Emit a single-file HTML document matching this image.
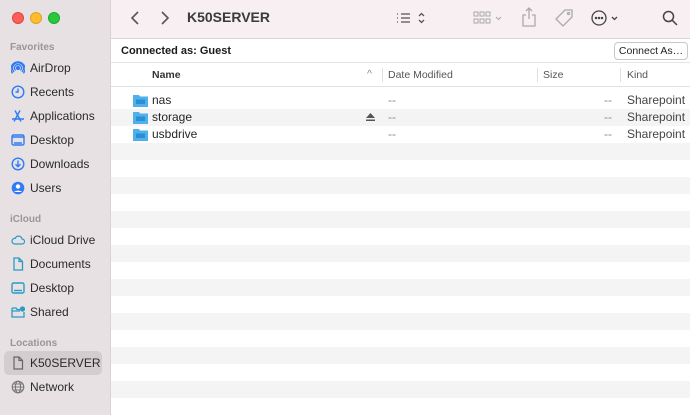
<!DOCTYPE html>
<html><head><meta charset="utf-8"><style>
*{margin:0;padding:0;box-sizing:border-box}
body{width:690px;height:415px;overflow:hidden;font-family:"Liberation Sans",sans-serif;background:#fff;position:relative;color:#262626}
.sb{position:absolute;left:0;top:0;width:111px;height:415px;background:#e7e1e4;border-right:1px solid #d8d2d5}
.dot{position:absolute;top:12px;width:12px;height:12px;border-radius:50%}
.sec{position:absolute;left:10px;font-size:10px;color:#9a9598;font-weight:bold}
.it{position:absolute;left:30px;font-size:12px;color:#2a2a2a}
.ic{position:absolute;left:11px;width:14px;height:14px}
.tb{position:absolute;left:111px;top:0;width:579px;height:39px;background:#f7eff2;border-bottom:1px solid #dcd6d8}
.cb{position:absolute;left:111px;top:39px;width:579px;height:24px;border-bottom:1px solid #e4e4e4}
.hd{position:absolute;left:111px;top:63px;width:579px;height:24px;border-bottom:1px solid #e2e2e2;font-size:10.5px;color:#555}
.row{position:absolute;left:111px;width:579px;height:17px;font-size:12px}
.g{background:#f4f4f4}
.t{position:absolute;top:1px}
</style></head><body>
<div class="sb">
<div class="dot" style="left:12px;background:#fe5f57;border:0.5px solid #e0443e"></div>
<div class="dot" style="left:30px;background:#febc2e;border:0.5px solid #dea123"></div>
<div class="dot" style="left:48px;background:#28c840;border:0.5px solid #1aab29"></div>
<div class="sec" style="top:42px">Favorites</div>
<svg class="ic" style="top:61px" viewBox="0 0 14 14" fill="none" stroke="#2f7bf5" stroke-width="1.3"><circle cx="7" cy="7" r="1.5" fill="#2f7bf5"/><path d="M4.5 9.5a3.5 3.5 0 1 1 5 0M3 11a5.5 5.5 0 1 1 8 0M1.6 12.3a7 7 0 1 1 10.8 0"/></svg>
<div class="it" style="top:61px">AirDrop</div>
<svg class="ic" style="top:85px" viewBox="0 0 14 14" fill="none" stroke="#2f7bf5" stroke-width="1.4"><circle cx="7" cy="7" r="5.8"/><path d="M7 3.5V7H4.5"/></svg>
<div class="it" style="top:85px">Recents</div>
<svg class="ic" style="top:109px" viewBox="0 0 14 14" fill="none" stroke="#2f7bf5" stroke-width="1.4"><path d="M4 1.5l6 11M9 1.5l-6 11M1 10h12"/></svg>
<div class="it" style="top:109px">Applications</div>
<svg class="ic" style="top:133px" viewBox="0 0 14 14" fill="none" stroke="#2f7bf5" stroke-width="1.4"><rect x="1" y="2" width="12" height="10" rx="1.5"/><path d="M1 4h12M3 10h8"/></svg>
<div class="it" style="top:133px">Desktop</div>
<svg class="ic" style="top:157px" viewBox="0 0 14 14" fill="none" stroke="#2f7bf5" stroke-width="1.4"><circle cx="7" cy="7" r="5.8"/><path d="M7 3.5v6M4.5 7.3L7 9.7l2.5-2.4"/></svg>
<div class="it" style="top:157px">Downloads</div>
<svg class="ic" style="top:181px" viewBox="0 0 14 14"><circle cx="7" cy="7" r="6.3" fill="#2f7bf5"/><circle cx="7" cy="5.5" r="2.2" fill="#fff"/><path d="M3 11a5 3.5 0 0 1 8 0" fill="#fff"/></svg>
<div class="it" style="top:181px">Users</div>
<div class="sec" style="top:214px">iCloud</div>
<svg class="ic" style="top:233px" viewBox="0 0 14 14" fill="none" stroke="#2a9cc4" stroke-width="1.2"><path d="M3.5 11h7.5a2.5 2.5 0 0 0 0-5 3.5 3.5 0 0 0-6.7-.7A2.8 2.8 0 0 0 3.5 11z"/></svg>
<div class="it" style="top:233px">iCloud Drive</div>
<svg class="ic" style="top:257px" viewBox="0 0 14 14" fill="none" stroke="#2a9cc4" stroke-width="1.3"><path d="M3 1h5l3.5 3.5V13H3zM8 1v3.5h3.5"/></svg>
<div class="it" style="top:257px">Documents</div>
<svg class="ic" style="top:281px" viewBox="0 0 14 14" fill="none" stroke="#2a9cc4" stroke-width="1.4"><rect x="1" y="2" width="12" height="10" rx="1.5"/><path d="M3 9.5h8"/></svg>
<div class="it" style="top:281px">Desktop</div>
<svg class="ic" style="top:305px" viewBox="0 0 14 14" fill="none" stroke="#2a9cc4" stroke-width="1.3"><path d="M1 3h4l1 1.5h3M1 3v9h12V7M1 6h8"/><circle cx="11.5" cy="4" r="2" fill="#2a9cc4"/></svg>
<div class="it" style="top:305px">Shared</div>
<div class="sec" style="top:338px">Locations</div>
<div style="position:absolute;left:4px;top:351px;width:98px;height:24px;background:#d3cdd0;border-radius:5px"></div>
<svg class="ic" style="top:356px" viewBox="0 0 14 14" fill="none" stroke="#666" stroke-width="1.2"><path d="M3 1h5l3.5 3.5V13H3zM8 1v3.5h3.5"/></svg>
<div class="it" style="top:356px">K50SERVER</div>
<svg class="ic" style="top:380px" viewBox="0 0 14 14" fill="none" stroke="#777" stroke-width="1.1"><circle cx="7" cy="7" r="5.8"/><ellipse cx="7" cy="7" rx="2.6" ry="5.8"/><path d="M1.2 7h11.6M2 4h10M2 10h10"/></svg>
<div class="it" style="top:380px">Network</div>
</div>
<div class="tb">
<svg style="position:absolute;left:19px;top:10px" width="10" height="16" viewBox="0 0 10 16" fill="none" stroke="#555" stroke-width="1.6"><path d="M8 2L2 8l6 6"/></svg>
<svg style="position:absolute;left:49px;top:10px" width="10" height="16" viewBox="0 0 10 16" fill="none" stroke="#555" stroke-width="1.6"><path d="M2 2l6 6-6 6"/></svg>
<div style="position:absolute;left:76px;top:9px;font-size:14px;font-weight:bold;color:#3a3a3a">K50SERVER</div>
<svg style="position:absolute;left:284px;top:10px" width="36" height="16" viewBox="0 0 36 16" fill="none" stroke="#555" stroke-width="1.3"><path d="M2 4h1M2 8h1M2 12h1M6 4h9M6 8h9M6 12h9M24 6l2.5-2.5L29 6M24 10l2.5 2.5L29 10"/></svg>
<svg style="position:absolute;left:362px;top:10px" width="32" height="16" viewBox="0 0 32 16" fill="none" stroke="#aaa" stroke-width="1"><rect x="1" y="2" width="4" height="4"/><rect x="7" y="2" width="4" height="4"/><rect x="13" y="2" width="4" height="4"/><rect x="1" y="9" width="4" height="4"/><rect x="7" y="9" width="4" height="4"/><rect x="13" y="9" width="4" height="4"/><path d="M23 7l2.5 2.5L28 7"/></svg>
<svg style="position:absolute;left:410px;top:6px" width="16" height="22" viewBox="0 0 16 22" fill="none" stroke="#aaa" stroke-width="1.3"><path d="M8 2v11M5 5l3-3 3 3M5 9H2v11h12V9h-3"/></svg>
<svg style="position:absolute;left:443px;top:8px" width="20" height="20" viewBox="0 0 20 20" fill="none" stroke="#aaa" stroke-width="1.3"><path d="M11 2h7v7l-9 9-7-7z"/><circle cx="14.5" cy="5.5" r="1"/></svg>
<svg style="position:absolute;left:480px;top:9px" width="32" height="18" viewBox="0 0 32 18" fill="none" stroke="#444" stroke-width="1.3"><circle cx="8" cy="9" r="7"/><circle cx="5" cy="9" r=".6" fill="#444"/><circle cx="8" cy="9" r=".6" fill="#444"/><circle cx="11" cy="9" r=".6" fill="#444"/><path d="M21 8l2.5 2.5L26 8"/></svg>
<svg style="position:absolute;left:551px;top:10px" width="16" height="16" viewBox="0 0 16 16" fill="none" stroke="#444" stroke-width="1.5"><circle cx="6.5" cy="6.5" r="5"/><path d="M10.2 10.2L15 15"/></svg>
</div>
<div class="cb">
<div style="position:absolute;left:10px;top:6px;font-size:11px;font-weight:bold;color:#1a1a1a">Connected as: Guest</div>
<div style="position:absolute;left:503px;top:3px;width:74px;height:18px;border:1px solid #c8c8c8;border-radius:4px;font-size:10.5px;text-align:center;line-height:16px;color:#222;background:#fff">Connect As…</div>
</div>
<div class="hd">
<div style="position:absolute;left:41px;top:6px;font-weight:bold;color:#333">Name</div>
<div style="position:absolute;left:256px;top:5px;color:#888">^</div>
<div style="position:absolute;left:271px;top:5px;width:1px;height:14px;background:#e0e0e0"></div>
<div style="position:absolute;left:277px;top:6px">Date Modified</div>
<div style="position:absolute;left:426px;top:5px;width:1px;height:14px;background:#e0e0e0"></div>
<div style="position:absolute;left:432px;top:6px">Size</div>
<div style="position:absolute;left:509px;top:5px;width:1px;height:14px;background:#e0e0e0"></div>
<div style="position:absolute;left:516px;top:6px">Kind</div>
</div>
<div class="row" style="top:92px"><svg style="position:absolute;left:22px;top:2px" width="15" height="13" viewBox="0 0 15 13"><path d="M0 1h6l1 1.5h8V13H0z" fill="#4fb0ea"/><rect x="3" y="5.5" width="9" height="4.5" fill="#2a8fd4"/></svg><span class="t" style="left:41px">nas</span><span class="t" style="left:277px;color:#888">--</span><span class="t" style="left:493px;color:#888">--</span><span class="t" style="left:516px;color:#444">Sharepoint</span></div>
<div class="row g" style="top:109px"><svg style="position:absolute;left:22px;top:2px" width="15" height="13" viewBox="0 0 15 13"><path d="M0 1h6l1 1.5h8V13H0z" fill="#4fb0ea"/><rect x="3" y="5.5" width="9" height="4.5" fill="#2a8fd4"/></svg><span class="t" style="left:41px">storage</span><svg style="position:absolute;left:255px;top:4px" width="9" height="9" viewBox="0 0 9 9" fill="#555"><path d="M4.5 0L9 5H0z"/><rect y="6.5" width="9" height="1.5"/></svg><span class="t" style="left:277px;color:#888">--</span><span class="t" style="left:493px;color:#888">--</span><span class="t" style="left:516px;color:#444">Sharepoint</span></div>
<div class="row" style="top:126px"><svg style="position:absolute;left:22px;top:2px" width="15" height="13" viewBox="0 0 15 13"><path d="M0 1h6l1 1.5h8V13H0z" fill="#4fb0ea"/><rect x="3" y="5.5" width="9" height="4.5" fill="#2a8fd4"/></svg><span class="t" style="left:41px">usbdrive</span><span class="t" style="left:277px;color:#888">--</span><span class="t" style="left:493px;color:#888">--</span><span class="t" style="left:516px;color:#444">Sharepoint</span></div>
<div class="row g" style="top:143px"></div>
<div class="row g" style="top:177px"></div>
<div class="row g" style="top:211px"></div>
<div class="row g" style="top:245px"></div>
<div class="row g" style="top:279px"></div>
<div class="row g" style="top:313px"></div>
<div class="row g" style="top:347px"></div>
<div class="row g" style="top:381px"></div>
</body></html>
